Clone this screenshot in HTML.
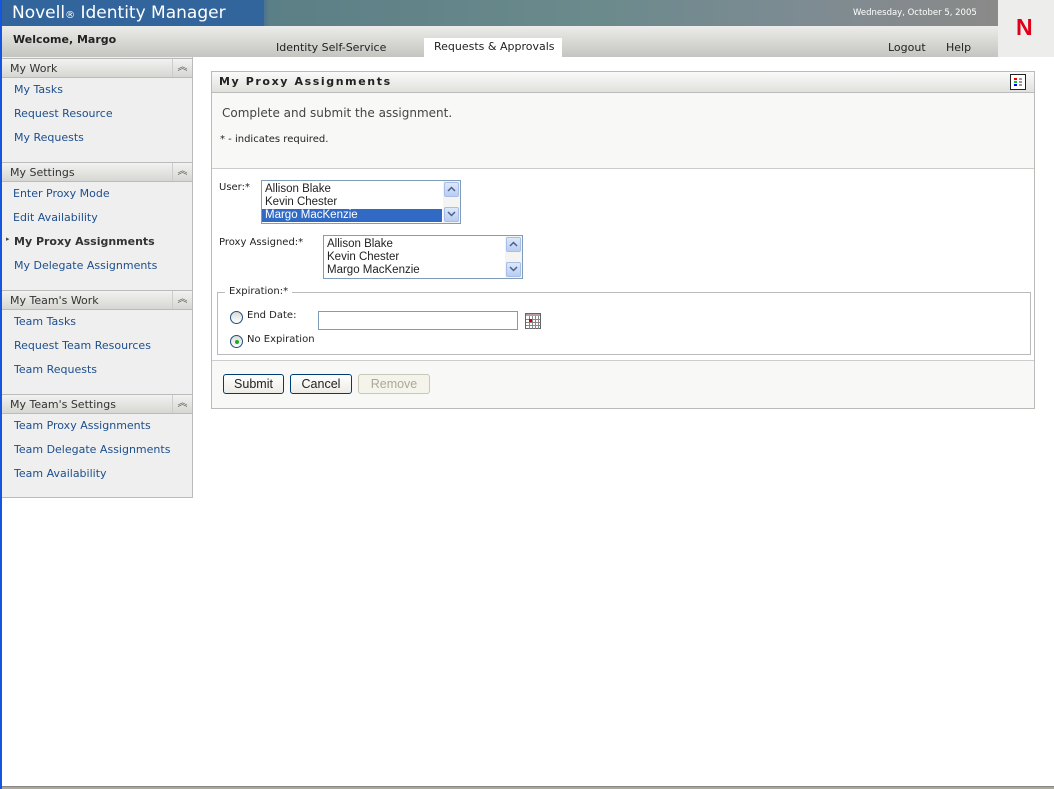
<!DOCTYPE html>
<html><head><meta charset="utf-8"><style>
*{margin:0;padding:0;box-sizing:border-box}
body{width:1054px;height:789px;position:relative;overflow:hidden;background:#fff;font-family:"DejaVu Sans","Liberation Sans",sans-serif;font-size:11px;color:#222}
.a{position:absolute}
.lnk{color:#1d4f8c;font-size:11px;position:absolute;left:14px}
.sh{position:absolute;left:2px;width:190px;height:20px;background:linear-gradient(#f2f2f0,#d6d6d2);border-top:1px solid #bbb;border-bottom:1px solid #bbb;font-size:11px;color:#333;padding:3px 0 0 8px}
.sh i{position:absolute;right:0;top:0;width:20px;height:18px;border-left:1px solid #ccc;font-style:normal;text-align:center;font-size:10px;color:#555;line-height:18px}
.lb{position:absolute;background:#fff;border:1px solid #7f9db9;font-family:"Liberation Sans",sans-serif;font-size:11.5px;line-height:13px}
.lb p{padding-left:3px;height:13px}
.sb{position:absolute;right:0;top:0;width:17px;height:42px;background:#f4f4f2}
.sb b{position:absolute;left:1px;width:15px;height:15px;background:linear-gradient(#dce8fb,#b8cdf3);border:1px solid #a8bde8;border-radius:2px}
.btn{position:absolute;top:374px;height:20px;border:1px solid #003c74;border-radius:3px;background:linear-gradient(#fff,#ecebe6);font-family:"Liberation Sans",sans-serif;font-size:12.5px;text-align:center;line-height:18px}
.rad{position:absolute;width:13px;height:13px;border-radius:50%;border:1px solid #1c5180;background:linear-gradient(#dcdcd6,#fff)}
</style></head><body>
<div class="a" style="left:0;top:0;width:998px;height:26px;background:linear-gradient(90deg,#3d6a97 0,#3d6a97 26%,#5b7f86 27%,#6b8a8c 60%,#7d8b93 80%,#8a8a88 100%)"></div>
<div class="a" style="left:0;top:0;width:264px;height:26px;background:#33659d"></div>
<div class="a" style="left:12px;top:3px;color:#fff;font-size:17px;font-family:'DejaVu Sans',sans-serif">Novell<span style="font-size:10px">®</span> Identity Manager</div>
<div class="a" style="left:853px;top:8px;color:#fff;font-size:8.5px">Wednesday, October 5, 2005</div>
<div class="a" style="left:998px;top:0;width:56px;height:57px;background:#ededeb"></div>
<div class="a" style="left:1016px;top:14px;color:#e0001a;font-size:23px;font-weight:bold;font-family:'Liberation Sans',sans-serif">N</div>
<div class="a" style="left:0;top:26px;width:998px;height:31px;background:linear-gradient(#ececea,#d4d4d0 60%,#c4c4c0)"></div>
<div class="a" style="left:13px;top:33px;font-weight:bold;font-size:11px;color:#222">Welcome, Margo</div>
<div class="a" style="left:276px;top:41px;font-size:11px">Identity Self-Service</div>
<div class="a" style="left:424px;top:38px;width:138px;height:20px;background:#fff"></div>
<div class="a" style="left:434px;top:40px;font-size:11px">Requests &amp; Approvals</div>
<div class="a" style="left:888px;top:41px;font-size:11px">Logout</div>
<div class="a" style="left:946px;top:41px;font-size:11px">Help</div>
<div class="a" style="left:0;top:0;width:2px;height:789px;background:#1655e0"></div>
<div class="a" style="left:2px;top:57px;width:191px;height:441px;background:#efefef;border-right:1px solid #bbb;border-bottom:1px solid #bbb"></div>
<div class="sh" style="top:58px">My Work<i>︽</i></div>
<div class="lnk" style="top:83px">My Tasks</div>
<div class="lnk" style="top:107px">Request Resource</div>
<div class="lnk" style="top:131px">My Requests</div>
<div class="sh" style="top:162px">My Settings<i>︽</i></div>
<div class="lnk" style="top:187px;left:13px">Enter Proxy Mode</div>
<div class="lnk" style="top:211px;left:13px">Edit Availability</div>
<div class="a" style="left:6px;top:235px;font-size:7px;color:#444">▸</div>
<div class="lnk" style="top:235px;color:#333;font-weight:bold">My Proxy Assignments</div>
<div class="lnk" style="top:259px">My Delegate Assignments</div>
<div class="sh" style="top:290px">My Team's Work<i>︽</i></div>
<div class="lnk" style="top:315px">Team Tasks</div>
<div class="lnk" style="top:339px">Request Team Resources</div>
<div class="lnk" style="top:363px">Team Requests</div>
<div class="sh" style="top:394px">My Team's Settings<i>︽</i></div>
<div class="lnk" style="top:419px">Team Proxy Assignments</div>
<div class="lnk" style="top:443px">Team Delegate Assignments</div>
<div class="lnk" style="top:467px">Team Availability</div>

<div class="a" style="left:211px;top:71px;width:824px;height:338px;border:1px solid #bbb;background:#f8f8f7"></div>
<div class="a" style="left:212px;top:72px;width:822px;height:21px;background:linear-gradient(#fafafa,#e0e0dc);border-bottom:1px solid #bbb"></div>
<div class="a" style="left:219px;top:75px;font-weight:bold;font-size:11px;letter-spacing:1.6px">My Proxy Assignments</div>
<div class="a" style="left:1010px;top:74px;width:16px;height:16px;border:1px solid #222;background:#fff">
<div style="width:3px;height:2px;background:#e00;position:absolute;left:3px;top:3px"></div><div style="width:3px;height:2px;background:#2b2;position:absolute;left:3px;top:6px"></div><div style="width:3px;height:2px;background:#00e;position:absolute;left:3px;top:9px"></div>
<div style="width:3px;height:2px;background:#999;position:absolute;left:8px;top:3px"></div><div style="width:3px;height:2px;background:#999;position:absolute;left:8px;top:6px"></div><div style="width:3px;height:2px;background:#999;position:absolute;left:8px;top:9px"></div></div>
<div class="a" style="left:222px;top:106px;font-size:12px;color:#444">Complete and submit the assignment.</div>
<div class="a" style="left:220px;top:134px;font-size:10px">* - indicates required.</div>
<div class="a" style="left:212px;top:168px;width:822px;height:193px;background:#fff;border-top:1px solid #ccc;border-bottom:1px solid #ccc"></div>
<div class="a" style="left:219px;top:182px;font-size:10px">User:*</div>
<div class="lb" style="left:261px;top:180px;width:200px;height:44px;padding-top:2px">
<p>Allison Blake</p><p>Kevin Chester</p><p style="background:#316ac5;color:#fff;margin-right:18px">Margo MacKenzie</p>
<div class="sb"><b style="top:1px"></b><b style="top:26px"></b>
<svg class="a" style="left:0;top:0" width="17" height="42"><path d="M5 10 L8.5 6.5 L12 10 M5 31 L8.5 34.5 L12 31" fill="none" stroke="#4d6185" stroke-width="1.5"/></svg></div></div>
<div class="a" style="left:219px;top:237px;font-size:10px">Proxy Assigned:*</div>
<div class="lb" style="left:323px;top:235px;width:200px;height:44px;padding-top:2px">
<p>Allison Blake</p><p>Kevin Chester</p><p>Margo MacKenzie</p>
<div class="sb"><b style="top:1px"></b><b style="top:26px"></b>
<svg class="a" style="left:0;top:0" width="17" height="42"><path d="M5 10 L8.5 6.5 L12 10 M5 31 L8.5 34.5 L12 31" fill="none" stroke="#4d6185" stroke-width="1.5"/></svg></div></div>
<div class="a" style="left:217px;top:292px;width:814px;height:63px;border:1px solid #bbb"></div>
<div class="a" style="left:225px;top:286px;background:#fff;padding:0 4px;font-size:10px">Expiration:*</div>
<div class="rad" style="left:230px;top:311px"></div>
<div class="a" style="left:247px;top:310px;font-size:10px">End Date:</div>
<div class="a" style="left:318px;top:311px;width:200px;height:19px;border:1px solid #7f9db9;background:#fff"></div>
<svg class="a" style="left:525px;top:313px" width="16" height="16"><rect x="0.5" y="0.5" width="15" height="15" fill="#fff" stroke="#666"/><rect x="1" y="1" width="14" height="2" fill="#b9a"/><path d="M4.5 3V16M7.5 3V16M10.5 3V16M13.5 3V16M1 6.5H15M1 9.5H15M1 12.5H15" stroke="#888"/><rect x="4" y="6" width="3" height="3" fill="#d00"/></svg>
<div class="rad" style="left:230px;top:335px"></div>
<div class="a" style="left:235px;top:340px;width:4px;height:4px;border-radius:50%;background:#2a2"></div>
<div class="a" style="left:247px;top:334px;font-size:10px">No Expiration</div>
<div class="btn" style="left:223px;width:61px">Submit</div>
<div class="btn" style="left:290px;width:62px">Cancel</div>
<div class="btn" style="left:358px;width:72px;border-color:#c9c7ba;color:#aca899;background:#f5f4ea">Remove</div>
<div class="a" style="left:2px;top:786px;width:1052px;height:3px;background:#aca899;border-top:1px solid #888"></div>
</body></html>
